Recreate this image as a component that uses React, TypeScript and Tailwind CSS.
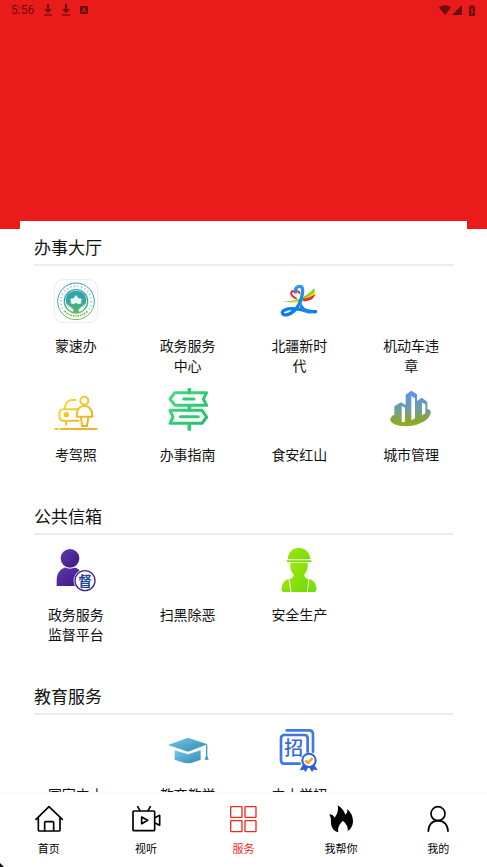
import type { ReactNode } from 'react';

interface Service {
  label: string;
  icon?: ReactNode;
}

interface Section {
  title: string;
  items: Service[];
}

const MengSuBanIcon = () => (
  <svg viewBox="43 27 132 132" className="h-11 w-11 overflow-visible" fill="none">
    <defs>
      <linearGradient id="badge" gradientUnits="userSpaceOnUse" x1="0" y1="38" x2="0" y2="150">
        <stop offset="0" stopColor="#2f9cc0" />
        <stop offset="0.5" stopColor="#35a79b" />
        <stop offset="1" stopColor="#7cc142" />
      </linearGradient>
    </defs>
    <rect x="45" y="29" width="128" height="128" rx="24" fill="#fff" stroke="#e9ebeb" strokeWidth="3" />
    <circle cx="109" cy="94" r="55" stroke="url(#badge)" strokeWidth="3" />
    <circle cx="109" cy="94" r="46" stroke="url(#badge)" strokeWidth="6" strokeDasharray="3 8" opacity="0.6" />
    <circle cx="109" cy="94" r="35" stroke="url(#badge)" strokeWidth="4" />
    <path d="M109 62c18 0 31 12 31 29 0 11-6 19-15 23-5 2-7 6-7 14h-18c0-8-2-12-7-14-9-4-15-12-15-23 0-17 13-29 31-29z" fill="url(#badge)" />
    <path d="M90 90l7-6 3 2 9-11 9 11 3-2 7 6-5 3 3 6-8 4-9-4-9 4-8-4 3-6z" fill="#e9f8f4" />
    <path d="M84 104c6 10 14 8 17 18M134 104c-6 10-14 8-17 18" stroke="#fff" strokeWidth="3" />
    <path d="M75 124c20 18 48 18 68 0" stroke="#63b85a" strokeWidth="4" strokeDasharray="4 3" />
  </svg>
);

const BeiJiangIcon = () => (
  <svg viewBox="22 12 132 132" className="h-11 w-11" fill="none" strokeLinecap="round">
    <defs>
      <linearGradient id="ribbon" gradientUnits="userSpaceOnUse" x1="80" y1="30" x2="90" y2="120">
        <stop offset="0" stopColor="#2b9be8" />
        <stop offset="1" stopColor="#0877f2" />
      </linearGradient>
    </defs>
    <path d="M32 79c36 2 72-6 102-40l1 14c-26 24-60 32-103 26z" fill="#7ed321" />
    <path d="M50 81c38 0 66-11 86-32l1 10c-22 20-50 28-87 22z" fill="#ffe21a" />
    <path d="M98 72c16-2 28-7 39-14-5 15-18 21-35 21z" fill="#f0262b" />
    <path d="M79 70C69 66 62 59 65 52c3-6 11-4 12 3 2-8 11-9 12-1" stroke="#ee2630" strokeWidth="6" />
    <path d="M77 48c1-10 7-14 13-14 9 0 10 9 8 22-3 21-12 40-26 53-11 10-28 14-33 7-5-9 11-16 32-15 28 1 49 11 67 9" stroke="url(#ribbon)" strokeWidth="10" />
    <path d="M94 80c3 14 14 25 42 31-14 8-34 5-46-8z" fill="#1684f2" />
  </svg>
);

const DrivingIcon = () => (
  <svg viewBox="43 24 132 132" className="h-11 w-11" fill="none" strokeWidth="6" strokeLinecap="round" strokeLinejoin="round">
    <defs>
      <linearGradient id="car" gradientUnits="userSpaceOnUse" x1="60" y1="50" x2="150" y2="150">
        <stop offset="0" stopColor="#fade3c" />
        <stop offset="1" stopColor="#dfac22" />
      </linearGradient>
    </defs>
    <g stroke="url(#car)">
      <path d="M108 60H98c-13 0-20 8-23 25M113 88H70c-8 0-11 6-11 16s3 18 11 18h47M79 124v10" />
      <circle cx="134" cy="62" r="12" />
      <path d="M111 110c0-18 6-32 23-32s24 14 24 32zM124 112l3 26h15l4-26" />
      <path d="M47 147h8" />
    </g>
    <path d="M64 147h107" stroke="#e6b727" />
    <circle cx="80" cy="104" r="8" fill="#efc52b" />
  </svg>
);

const GuideIcon = () => (
  <svg viewBox="377 24 132 132" className="h-11 w-11" fill="none" strokeLinejoin="round">
    <defs>
      <linearGradient id="sign" gradientUnits="userSpaceOnUse" x1="380" y1="30" x2="500" y2="150">
        <stop offset="0" stopColor="#45df86" />
        <stop offset="1" stopColor="#22b765" />
      </linearGradient>
    </defs>
    <g stroke="url(#sign)" strokeWidth="9">
      <path d="M404 38h95l-10 19 10 19h-95l-15-19z" />
      <path d="M389 91h96l14 20-14 19h-96l9-19z" />
    </g>
    <g stroke="#32cb75" strokeLinecap="round">
      <path d="M447 29v9M447 78v12M447 132v16" strokeWidth="11" />
      <path d="M430 57h31M420 110h54" strokeWidth="9" />
    </g>
  </svg>
);

const CityIcon = () => (
  <svg viewBox="27 24 132 132" className="h-11 w-11">
    <defs>
      <linearGradient id="city" gradientUnits="userSpaceOnUse" x1="0" y1="32" x2="0" y2="145">
        <stop offset="0" stopColor="#5a91ee" />
        <stop offset="0.45" stopColor="#6c9cae" />
        <stop offset="0.8" stopColor="#8ba52d" />
        <stop offset="1" stopColor="#8fb51b" />
      </linearGradient>
    </defs>
    <path
      d="M43 79l20-12 14 8V44l17-12 17 11v20l14-10 17 12v22c10 1 13 9 8 19-9 19-41 33-72 33-29 0-47-9-47-21 0-6 5-11 12-14z"
      fill="url(#city)"
    />
    <path d="M65 78l10 5v42l-10 2zM94 48l11 7v60l-11 6zM126 68l10 5v27l-10 6z" fill="#fff" />
  </svg>
);

const SupervisionIcon = () => (
  <svg viewBox="43 24 132 132" className="h-11 w-11">
    <defs>
      <linearGradient id="person" x1="0" y1="0" x2="1" y2="1">
        <stop offset="0" stopColor="#5d3aa5" />
        <stop offset="1" stopColor="#3f1688" />
      </linearGradient>
    </defs>
    <path d="M51 138v-19c0-21 14-35 30-38h20c17 4 29 17 29 34v23z" fill="url(#person)" />
    <circle cx="91" cy="56" r="30" fill="#fff" />
    <circle cx="91" cy="55" r="28" fill="url(#person)" />
    <circle cx="136" cy="122" r="34" fill="#fff" />
    <circle cx="136" cy="122" r="30" fill="#fff" stroke="#4a2590" strokeWidth="4" />
    <text x="136" y="137" textAnchor="middle" fontSize="41" fontWeight="700" fill="#1e4796" fontFamily="Noto Sans CJK SC, sans-serif">
      督
    </text>
  </svg>
);

const SafetyIcon = () => (
  <svg viewBox="37 24 132 132" className="h-11 w-11">
    <defs>
      <linearGradient id="worker" x1="0" y1="0" x2="1" y2="1">
        <stop offset="0" stopColor="#a0e60a" />
        <stop offset="1" stopColor="#6fda0c" />
      </linearGradient>
    </defs>
    <path d="M69 58c1-17 11-30 26-33 5-2 11-2 16 0 15 3 25 16 26 33zM66 61h74v5H66z" fill="url(#worker)" />
    <path d="M77 68h52c1 17-2 27-10 34-1 8 3 13 12 15l-4 39H80l-5-39c9-2 13-7 12-15-8-7-11-17-10-34z" fill="url(#worker)" />
    <path d="M72 117l5 39H57c-8-3-7-8-5-16 2-14 9-20 20-23zM134 117l-5 39h20c8-3 7-8 5-16-2-14-9-20-20-23z" fill="url(#worker)" />
  </svg>
);

const EducationIcon = () => (
  <svg viewBox="47 24 132 132" className="h-11 w-11">
    <defs>
      <linearGradient id="cap" x1="0" y1="0" x2="1" y2="1">
        <stop offset="0" stopColor="#74c6e3" />
        <stop offset="1" stopColor="#348cb1" />
      </linearGradient>
    </defs>
    <path d="M113 53l59 20-59 22-60-20z" fill="url(#cap)" />
    <path d="M73 91l40 12 38-12v28c-14 4-24 11-38 11s-26-7-40-11z" fill="url(#cap)" />
    <path d="M169 74v38" stroke="#4b9dbd" strokeWidth="4" />
    <path d="M167 109h4l4 10H163z" fill="#3f91b4" />
  </svg>
);

const AdmissionIcon = () => (
  <svg viewBox="382 24 132 132" className="h-11 w-11" fill="none" strokeLinecap="round">
    <path d="M411 31h67c8 0 12 4 12 12v52" stroke="#4078e6" strokeWidth="8" />
    <path d="M450 131h-47c-6 0-9-4-9-10V55c0-7 4-10 10-10h60c7 0 10 4 10 10v40" stroke="#3f76e4" strokeWidth="8" />
    <text x="432" y="105" textAnchor="middle" fontSize="57" fontWeight="500" fill="#3468df" fontFamily="Noto Sans CJK SC, sans-serif">
      招
    </text>
    <path d="M460 133l-10 18 12-2 6 7 9-16 10 16 5-7 12 1-11-18z" fill="#2e62db" />
    <circle cx="478" cy="121" r="20" fill="#fff" stroke="#2e62db" strokeWidth="6" />
    <path d="M467 121l8 8 14-15" stroke="#ffa311" strokeWidth="7" strokeLinecap="butt" />
  </svg>
);

const HomeIcon = () => (
  <svg viewBox="101 75 90 90" className="h-[30px] w-[30px]" fill="none" stroke="currentColor" strokeWidth="5" strokeLinecap="round" strokeLinejoin="round">
    <path d="M107 118l39-38 40 38M114 113v36c0 3 1 4 4 4h57c3 0 4-1 4-4v-36" />
    <path d="M133 152v-24c0-2 1-3 3-3h21c2 0 3 1 3 3v24" />
  </svg>
);

const VideoIcon = () => (
  <svg viewBox="393 75 90 90" className="h-[30px] w-[30px]" fill="none" stroke="currentColor" strokeWidth="5" strokeLinecap="round" strokeLinejoin="round">
    <rect x="399" y="93" width="65" height="59" rx="3" />
    <path d="M413 80l7 12M451 80l-7 12M425 111v20l18-10zM465 113l14-7v30l-14-7" />
  </svg>
);

const GridIcon = () => (
  <svg viewBox="25 75 90 90" className="h-[30px] w-[30px]" fill="none" stroke="currentColor" strokeWidth="4">
    <rect x="33" y="80" width="34" height="32" rx="2" />
    <rect x="76" y="80" width="33" height="32" rx="2" />
    <rect x="33" y="122" width="34" height="33" rx="2" />
    <rect x="76" y="122" width="33" height="33" rx="2" />
  </svg>
);

const FlameIcon = () => (
  <svg viewBox="318 75 90 90" className="h-[30px] w-[30px]" fill="currentColor">
    <path d="M353 76c11 7 19 15 23 28 5-4 7-9 6-17 10 9 17 21 17 36 0 13-5 24-16 30 2-12-4-23-15-31-7 10-16 16-13 35-14-4-22-16-22-29 0-9 0-16-5-25 7 0 12 3 16 10 8-11 12-22 9-37z" />
  </svg>
);

const UserIcon = () => (
  <svg viewBox="610 75 90 90" className="h-[30px] w-[30px]" fill="none" stroke="currentColor" strokeWidth="5" strokeLinecap="round">
    <circle cx="655" cy="101" r="21" />
    <path d="M626 154c0-19 11-32 29-32s30 13 30 32" />
  </svg>
);

const DownloadIcon = () => (
  <svg viewBox="0 0 12 12" className="h-3 w-3" fill="currentColor">
    <path d="M5 0h2v5h3L6 9 2 5h3z" />
    <path d="M2 10h8v2H2z" opacity="0.6" />
  </svg>
);

const sections: Section[] = [
  {
    title: '办事大厅',
    items: [
      { label: '蒙速办', icon: <MengSuBanIcon /> },
      { label: '政务服务中心' },
      { label: '北疆新时代', icon: <BeiJiangIcon /> },
      { label: '机动车违章' },
      { label: '考驾照', icon: <DrivingIcon /> },
      { label: '办事指南', icon: <GuideIcon /> },
      { label: '食安红山' },
      { label: '城市管理', icon: <CityIcon /> },
    ],
  },
  {
    title: '公共信箱',
    items: [
      { label: '政务服务监督平台', icon: <SupervisionIcon /> },
      { label: '扫黑除恶' },
      { label: '安全生产', icon: <SafetyIcon /> },
    ],
  },
  {
    title: '教育服务',
    items: [
      { label: '国家中小' },
      { label: '教育教学', icon: <EducationIcon /> },
      { label: '中小学招', icon: <AdmissionIcon /> },
    ],
  },
];

const tabs = [
  { label: '首页', icon: <HomeIcon /> },
  { label: '视听', icon: <VideoIcon /> },
  { label: '服务', icon: <GridIcon />, active: true },
  { label: '我帮你', icon: <FlameIcon /> },
  { label: '我的', icon: <UserIcon /> },
];

const StatusBar = () => (
  <div className="flex h-5 items-center justify-between pr-3 pl-[11px] text-[#6d0c0c]">
    <div className="flex items-center gap-1.5">
      <span className="mr-0.5 font-[Roboto,sans-serif] text-xs">5:56</span>
      <DownloadIcon />
      <DownloadIcon />
      <svg viewBox="0 0 12 12" className="h-3 w-3">
        <rect x="2" y="2" width="8" height="8" rx="1" fill="currentColor" />
        <path d="M4 8.500L6 3.500l2 5M4.700 7h2.600" stroke="#d81b1b" fill="none" />
      </svg>
    </div>
    <div className="flex items-center">
      <svg viewBox="0 0 12 10" className="h-2.5 w-3" fill="currentColor">
        <path d="M0 2.500C3.500-.5 8.500-.5 12 2.500L6 10z" />
      </svg>
      <svg viewBox="0 0 12 10" className="mr-1.5 h-2.5 w-3" fill="currentColor">
        <path d="M11 0v10H1z" />
      </svg>
      <svg viewBox="0 0 6 11" className="h-[11px] w-1.5">
        <path d="M2 0h2v1h2v10H0V1h2z" fill="currentColor" />
        <path d="M3.500 3L2 6h2L2.500 9" stroke="#e21b1b" fill="none" />
      </svg>
    </div>
  </div>
);

const ServiceSection = ({ title, items }: Section) => (
  <section className="mb-[26px]">
    <h2 className="mx-3.5 border-b-2 border-[#ececec] pt-[13px] pb-1 text-[17px] leading-[26px]">{title}</h2>
    <div className="grid grid-cols-4 gap-y-[13px] pt-[13px]">
      {items.map((item) => (
        <a key={item.label} href="#" className="flex flex-col items-center gap-3">
          <span className="block h-11 w-11">{item.icon}</span>
          <span className="w-15 text-center text-sm leading-5">{item.label}</span>
        </a>
      ))}
    </div>
  </section>
);

const App = () => {
  return (
    <div className="relative flex h-screen flex-col overflow-hidden bg-white font-['Noto_Sans_CJK_SC',sans-serif] text-[#111]">
      <header className="h-[229px] shrink-0 bg-[#ea1b1b]">
        <StatusBar />
      </header>

      <main className="z-10 mx-5 -mt-2 min-h-0 flex-1 overflow-hidden bg-white">
        {sections.map((section) => (
          <ServiceSection key={section.title} {...section} />
        ))}
      </main>

      <nav className="grid shrink-0 grid-cols-5 border-t border-[#fafafa] bg-white pt-3 pb-[11px]">
        {tabs.map((tab) => (
          <a
            key={tab.label}
            href="#"
            className={`flex flex-col items-center gap-[5px] ${tab.active ? 'text-[#ee2a1a]' : 'text-black'}`}
          >
            {tab.icon}
            <span className="text-[11px] leading-4">{tab.label}</span>
          </a>
        ))}
      </nav>

      <svg viewBox="0 0 4 4" className="absolute bottom-0 left-0 h-1 w-1">
        <path d="M0 0l4 4H0z" fill="#111" />
      </svg>
    </div>
  );
};

export default App;
